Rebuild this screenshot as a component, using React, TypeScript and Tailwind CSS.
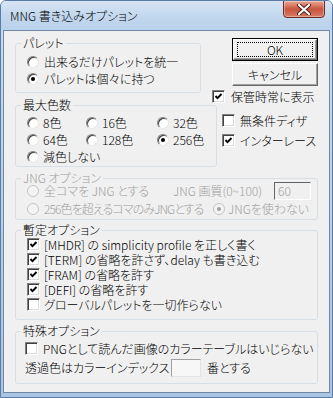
import React from 'react'

function Radio({ checked, disabled }: { checked?: boolean; disabled?: boolean }) {
  return (
    <span
      className={
        disabled
          ? 'flex w-[12px] h-[12px] shrink-0 items-center justify-center rounded-full border border-[#c4c4c4] bg-[#f4f4f4]'
          : 'flex w-[12px] h-[12px] shrink-0 items-center justify-center rounded-full border border-t-[#808080] border-l-[#808080] border-r-[#e8e8e8] border-b-[#e8e8e8] bg-white shadow-[inset_1px_1px_0_#404040]'
      }
    >
      {checked && <span className={disabled ? 'w-[4px] h-[4px] rounded-full bg-[#a0a0a0]' : 'w-[4px] h-[4px] rounded-full bg-black'} />}
    </span>
  )
}

function Check({ checked }: { checked?: boolean }) {
  return (
    <span className="flex w-[13px] h-[13px] shrink-0 items-center justify-center border border-t-[#808080] border-l-[#808080] border-r-white border-b-white bg-white shadow-[inset_1px_1px_0_#404040,inset_-1px_-1px_0_#dcdcdc]">
      {checked && (
        <svg width="9" height="9" viewBox="0 0 9 9">
          <polyline points="1.5,4 3.5,6.2 7.5,2" fill="none" stroke="#000" strokeWidth="1.9" />
        </svg>
      )}
    </span>
  )
}

function Group({ label, className, children, disabled }: { label: string; className: string; children: React.ReactNode; disabled?: boolean }) {
  return (
    <fieldset className={`border border-[#d5dfe5] rounded-[3px] ${className}`}>
      <legend className={`ml-[5px] px-[2px] leading-[14px] ${disabled ? 'text-[#a0a0a0]' : 'text-black'}`}>{label}</legend>
      {children}
    </fieldset>
  )
}

export default function App() {
  return (
    <div className="w-[333px] h-[398px] flex flex-col bg-gradient-to-b from-[#c9dcef] to-[#a9c5e3] border border-[#587ca6] rounded-t-[6px] text-[12px] leading-[12px] font-light whitespace-nowrap text-black font-[family-name:Noto_Sans_CJK_JP,sans-serif] [font-feature-settings:'palt'] overflow-hidden">
      {/* Title bar */}
      <div className="h-[29px] flex items-start justify-between shrink-0 bg-gradient-to-b from-[#d6e5f4] via-[#c3d8ee] to-[#b9d1ea]">
        <span className="pl-[9px] pt-[7px] leading-[16px] text-[12px] text-black">MNG 書き込みオプション</span>
        <div className="mr-[7px] w-[42px] h-[18px] -mt-[1px] flex items-center justify-center rounded-b-[4px] border border-[#6b2a22] bg-gradient-to-b from-[#e9a897] via-[#c8553f] to-[#d47a62] shadow-[inset_0_0_0_1px_rgba(255,255,255,0.35)]">
          <svg width="14" height="11" viewBox="0 0 14 11">
            <path d="M2 1 L12 10 M12 1 L2 10" stroke="#4a1a14" strokeWidth="4" strokeLinecap="round" />
            <path d="M2 1 L12 10 M12 1 L2 10" stroke="#ffffff" strokeWidth="2.2" strokeLinecap="round" />
          </svg>
        </div>
      </div>

      {/* Client area */}
      <div className="mx-[2px] flex-1 flex flex-col border border-[#6f88a8] bg-[#f0f0f0] px-[11px]">
        {/* Top */}
        <div className="flex">
          <div className="w-[202px] flex flex-col">
            <Group label="パレット" className="mt-[5px] w-[186px] h-[57px]">
              <div className="flex flex-col pt-[3px] pl-[11px]">
                <div className="h-[17px] flex items-center gap-[5px]">
                  <Radio />
                  <span>出来るだけパレットを統一</span>
                </div>
                <div className="h-[17px] flex items-center gap-[5px]">
                  <Radio checked />
                  <span>パレットは個々に持つ</span>
                </div>
              </div>
            </Group>
            <Group label="最大色数" className="mt-[5px] w-[202px] h-[69px]">
              <div className="grid grid-cols-[59px_71px_1fr] pt-[2px] pl-[11px]">
                {[
                  ['8色', false],
                  ['16色', false],
                  ['32色', false],
                  ['64色', false],
                  ['128色', false],
                  ['256色', true],
                  ['減色しない', false],
                ].map(([t, c], i) => (
                  <div key={i} className={`h-[17px] flex items-center gap-[4px] ${i === 6 ? 'col-span-3' : ''}`}>
                    <Radio checked={c as boolean} />
                    <span>{t as string}</span>
                  </div>
                ))}
              </div>
            </Group>
          </div>

          <div className="flex-1 flex flex-col pt-[7px]">
            <div className="ml-[15px] w-[86px] h-[23px] border border-black">
              <div className="w-full h-full flex items-center justify-center border border-t-white border-l-white border-r-[#696969] border-b-[#696969] shadow-[inset_-1px_-1px_0_#a0a0a0]">
                <span className="w-[76px] h-[15px] flex items-center justify-center border border-dotted border-black">OK</span>
              </div>
            </div>
            <div className="ml-[15px] mt-[2px] w-[86px] h-[23px] flex items-center justify-center border border-t-white border-l-white border-r-[#696969] border-b-[#696969] shadow-[inset_-1px_-1px_0_#a0a0a0]">
              キャンセル
            </div>
            <div className="-ml-[5px] mt-[2px] h-[17px] flex items-center gap-[6px]">
              <Check checked />
              <span>保管時常に表示</span>
            </div>
            <div className="ml-[5px] mt-[7px] h-[17px] flex items-center gap-[5px]">
              <Check />
              <span>無条件ディザ</span>
            </div>
            <div className="ml-[5px] mt-[3px] h-[17px] flex items-center gap-[5px]">
              <Check checked />
              <span>インターレース</span>
            </div>
          </div>
        </div>

        {/* JNG */}
        <Group label="JNG オプション" disabled className="mt-[4px] h-[49px] text-[#a0a0a0]">
          <div className="flex flex-col -mt-[3px] pl-[11px] pr-[6px]">
            <div className="h-[18px] flex items-center">
              <Radio disabled />
              <span className="ml-[5px] w-[129px]">全コマを JNG とする</span>
              <span className="flex-1">JNG 画質(0~100)</span>
              <span className="w-[37px] h-[18px] flex items-center pl-[3px] border border-t-[#646464] border-l-[#646464] border-r-white border-b-white bg-[#f0f0f0]">60</span>
            </div>
            <div className="h-[17px] flex items-center">
              <Radio disabled />
              <span className="ml-[5px] w-[169px] tracking-[-0.9px]">256色を超えるコマのみJNGとする</span>
              <Radio disabled checked />
              <span className="ml-[3px]">JNGを使わない</span>
            </div>
          </div>
        </Group>

        {/* 暫定 */}
        <Group label="暫定オプション" className="mt-[3px] h-[97px]">
          <div className="flex flex-col pl-[11px]">
            {[
              ['[MHDR] の simplicity profile を正しく書く', true],
              ['[TERM] の省略を許さず、delay も書き込む', true],
              ['[FRAM] の省略を許す', true],
              ['[DEFI] の省略を許す', true],
              ['グローバルパレットを一切作らない', false],
            ].map(([t, c], i) => (
              <div key={i} className="h-[15px] flex items-center gap-[4px]">
                <Check checked={c as boolean} />
                <span>{t as string}</span>
              </div>
            ))}
          </div>
        </Group>

        {/* 特殊 */}
        <Group label="特殊オプション" className="mt-[4px] h-[60px]">
          <div className="flex flex-col pl-[9px]">
            <div className="mt-[2px] h-[17px] flex items-center gap-[5px]">
              <Check />
              <span>PNGとして読んだ画像のカラーテーブルはいじらない</span>
            </div>
            <div className="mt-[2px] h-[18px] flex items-center">
              <span className="w-[146px]">透過色はカラーインデックス</span>
              <span className="w-[30px] h-[18px] border border-t-[#a0a0a0] border-l-[#a0a0a0] border-r-[#e3e3e3] border-b-[#e3e3e3] bg-[#f7f7f7]" />
              <span className="ml-[6px]">番とする</span>
            </div>
          </div>
        </Group>
      </div>
      <div className="h-[4px] shrink-0" />
    </div>
  )
}
